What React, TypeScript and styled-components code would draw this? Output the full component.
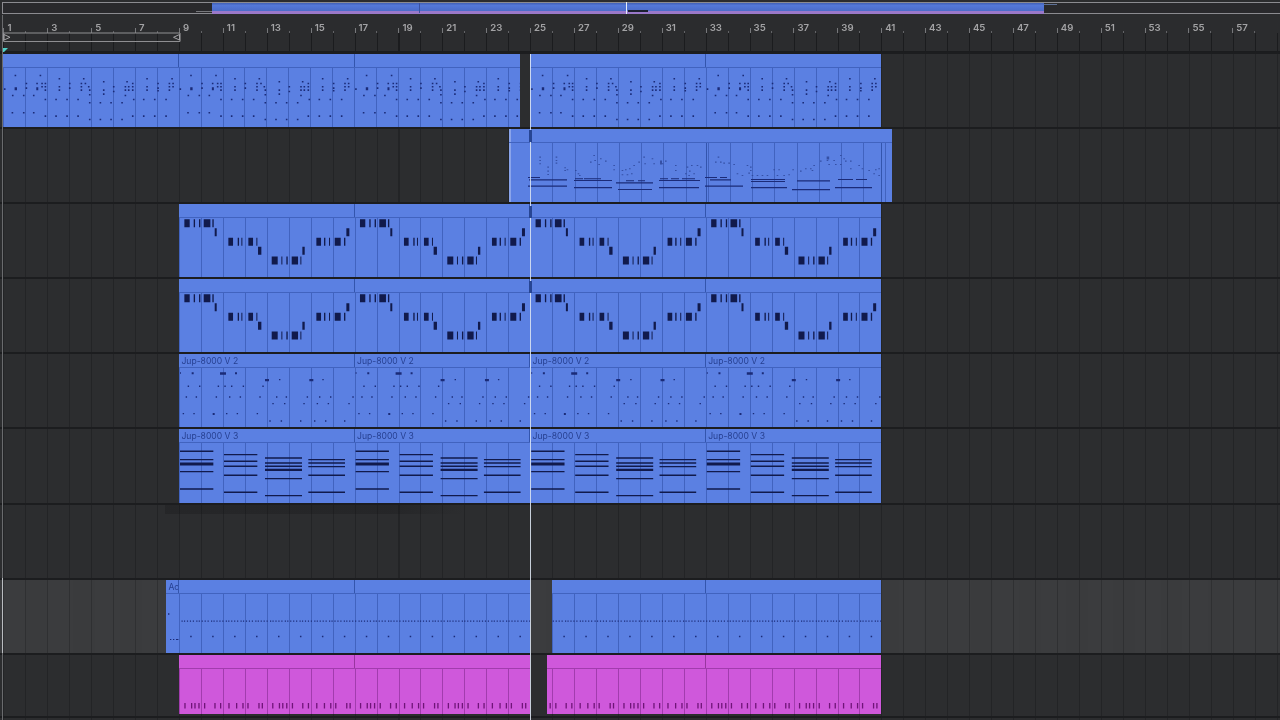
import React from 'react';
import styled, { createGlobalStyle } from 'styled-components';

const BAR = 21.95;
const ORIGIN = 3.4;
const ROW = 75.1;
const TOP = 52;
const PHRASE = BAR * 8;

type Rect = [number, number, number, number];

const barX = (bar: number) => ORIGIN + (bar - 1) * BAR;
const rowTop = (i: number) => TOP + ROW * i;

// vertical lines repeating along the timeline, phase in px from the left edge
const lines = (x: number, color: string, period: number, size = 1) => {
  const p = ((x % period) + period) % period;
  return `repeating-linear-gradient(90deg, transparent 0, transparent ${p}px, ${color} ${p}px, ${color} ${p + size}px, transparent ${p + size}px, transparent ${period}px)`;
};

// "x,y[,w[,h]]" lists read off the reference at 3x, repeated per phrase
const dots = (src: string, ox: number, oy: number, w = 1.6, h = 1.6, times = 5, period = PHRASE): Rect[] => {
  const out: Rect[] = [];
  const items = src.trim().split(/\s+/).map((s) => s.split(',').map(Number));
  for (let k = 0; k < times; k++) {
    items.forEach(([x, y, a, b]) => {
      out.push([ox + x / 3 + k * period, oy + y / 3, a ?? w, b ?? h]);
    });
  }
  return out;
};

const drumNotes = dots(
  `45,224 13,265 45,262,2.4,3 37,284 70,284 78,248 78,262 36,336 70,336
   120,224 110,248 110,262,2,3 125,248 135,248 125,258 135,258 135,268 100,284 135,296 100,336 135,346
   177,234 177,258 177,268 167,296 200,296 167,346 200,346 208,248 208,262
   250,234 243,248 255,248 243,258 243,268 265,258 268,268 268,282 233,296 268,306 233,346 268,356
   310,243 310,268 310,280 300,306 332,306 300,356 332,356 340,258 340,272
   380,243 375,258 385,258 397,248 397,258 375,268 385,268 397,268 375,284 365,306 400,296 365,356 397,346
   440,234 440,258 440,268 430,296 463,296 430,346 463,346 473,248 473,262 473,270
   515,234 507,248 518,248 507,258 507,268 518,258 497,296 497,346`,
  0,
  0
);

const leadLines: Rect[] = [
  [528, 177, 12, 1.2], [529, 179.4, 38, 1.3], [528, 185.6, 39, 1.3],
  [575, 178.4, 8, 1], [584, 178.4, 17, 1], [574, 180, 38, 1.2], [574, 187, 38, 1.3],
  [626, 180.4, 8, 1], [638, 180.4, 7, 1], [616, 182.4, 37, 1.2], [618, 189, 34, 1.2],
  [660, 178.4, 8, 1], [671, 178.4, 8, 1], [682, 178.4, 13, 1], [659, 180, 41, 1.2], [659, 187, 40, 1.3],
  [705, 177, 12, 1.2], [720, 177, 7, 1.2], [710, 179.4, 21, 1.3], [705, 185.6, 38, 1.3],
  [751, 179, 34, 1.2], [751, 181, 34, 1.2], [751, 187, 36, 1.3],
  [797, 180.4, 33, 1.2], [792, 189, 38, 1.3],
  [838, 179, 15, 1.2], [856, 179, 11, 1.2], [835, 187, 37, 1.3],
];

const leadDots: Rect[] = [
  ...dots(
    `103,50 103,60 103,70 152,50 152,60 152,68 127,80 127,92 127,102 178,82 178,90 185,88 210,90 218,100 222,105
     265,45 268,60 255,65 285,55 300,62 280,72 325,75 325,88 350,90 360,88 372,85 385,75 400,65 415,50 418,70
     440,55 445,70 465,62,2,4 470,70 480,62 510,75 510,90 545,80 552,92 558,75 575,75 585,80 350,103 365,103
     378,100 540,100 550,105 565,100`,
    505, 140, 1.6, 1.1, 1
  ),
  ...dots(
    `30,65 38,50 45,65 55,68 70,68 85,72 125,75 135,80 135,90 130,98 140,105 155,105 170,105 185,105 205,88 220,88
     215,105 235,105 250,103 262,88 285,92 300,85 315,85 325,75 320,90 345,62 365,50,2.5,3 365,60 385,60 405,45
     415,55 420,62 435,62 370,72 390,72 405,72 435,85 460,75 470,85 490,90 510,88 520,85 505,100 520,105 95,100 110,105`,
    705, 140, 1.6, 1.1, 1
  ),
];

const arpBlocks = (row: number): Rect[] => {
  const src: Rect[] = [
    [44, 58, 16, 24], [72, 58, 4, 24], [88, 58, 4, 24], [102, 58, 20, 24], [128, 58, 4, 24], [135, 85, 6, 24],
    [176, 114, 14, 24], [204, 114, 4, 24], [215, 114, 3, 24], [236, 114, 14, 24], [260, 114, 3, 24], [265, 141, 10, 24],
    [306, 170, 18, 24], [335, 170, 3, 24], [350, 170, 4, 24], [366, 170, 19, 24], [392, 170, 3, 24], [398, 141, 7, 24],
    [440, 114, 14, 24], [463, 114, 4, 24], [478, 114, 3, 24], [495, 114, 18, 24], [523, 114, 4, 24], [530, 85, 9, 24],
  ];
  const out: Rect[] = [];
  for (let k = 0; k < 4; k++) {
    src.forEach(([x, y, w, h]) => {
      out.push([169.7 + x / 3 + k * PHRASE, 200 + y / 3 + row * ROW, w / 3, h / 3]);
    });
  }
  return out;
};

const pluckNotes: Rect[] = dots(
  `30,68,1,1.6 65,68,2,2 150,68,6,2.4 195,68,2,2
   285,88,4,2.4 327,88 418,88,4,2.4 457,88
   53,108 87,108 143,108 163,108 183,108 218,108 277,108
   47,140 77,140 137,140 177,140 209,140 268,140 318,140 347,140 410,140 447,140 480,140 547,140
   307,160 342,160 400,160 440,160 473,160 535,160
   38,190 70,190 128,190,2,2 168,190 200,190 260,190
   298,212 332,212 390,212 432,212 465,212 522,212`,
  170,
  350,
  1.4,
  1.4,
  4
);

const chordNotes: Rect[] = (() => {
  const groups: [number, number, number[]][] = [
    [30, 100, [305, 330, 366, 418]],
    [162, 100, [315, 335, 350, 377, 428]],
    [285, 111, [325, 340, 350, 387, 438]],
    [415, 110, [330, 340, 351, 377, 428]],
  ];
  const out: Rect[] = [];
  for (let k = 0; k < 4; k++) {
    groups.forEach(([x, w, ys]) => {
      ys.forEach((y) => out.push([170 + x / 3 + k * PHRASE, 350 + y / 3 - 0.6, w / 3, 1.4]));
    });
    out.push([170 + 30 / 3 + k * PHRASE, 350 + 343 / 3 - 1.4, 100 / 3, 3]);
    out.push([170 + 285 / 3 + k * PHRASE, 350 + 361 / 3 - 1, 111 / 3, 2.2]);
  }
  return out;
})();

const hatLine: Rect[] = Array.from({ length: 238 }, (_, i) => [181 + i * 2.95 + (i % 5 === 0 ? 0.5 : 0), 620.3, 1.2, 1.1] as Rect);
const kickDots: Rect[] = [
  ...Array.from({ length: 32 }, (_, i) => [190.2 + i * BAR, 635.5, 1.5, 1.5] as Rect),
  [168, 613, 1.4, 1.4],
  [170, 638.6, 1.3, 1.2],
  [173, 638.6, 1.3, 1.2],
  [176, 638.6, 2.4, 1.2],
];

const rimTicks: Rect[] = dots(
  '553,0 573,0 583,0 595,0 612,0 643,0 660,0 685,0 708,0 727,0 742,0 775,0 785,0',
  0,
  702.7,
  1.3,
  5.6,
  9,
  BAR * 4
);

const palette = {
  blue: { fill: '#5b80e2', rule: '#4163bf', seam: '#3355ad', note: '#1b2b78', faint: '#2c4496', text: '#263f90' },
  pink: { fill: '#cf58db', rule: '#a23cae', seam: '#98359f', note: '#6f1478', faint: '#6f1478', text: '#6f1478' },
};

type Tone = keyof typeof palette;

const GlobalStyle = createGlobalStyle`
  html, body {
    margin: 0;
    background: #2b2c2e;
    font-family: Inter, "Liberation Sans", sans-serif;
  }
`;

const Page = styled.div`
  position: relative;
  width: 1280px;
  height: 720px;
  overflow: hidden;
  background: #2b2c2e;
  filter: blur(0.3px);
`;

const Overview = styled.div`
  height: 15px;
  padding: 2px 0 0 2px;
  box-sizing: border-box;
`;

const OverviewFrame = styled.div`
  display: flex;
  height: 12px;
  box-sizing: border-box;
  background: #29292c;
  border-top: 1px solid #8b8b90;
  border-bottom: 1px solid #8b8b90;
  border-left: 1px solid #8b8b90;
`;

const OverviewGap = styled.div`
  display: flex;
  align-items: flex-end;
  justify-content: flex-end;
  width: 209px;
  flex: none;
`;

const OverviewStub = styled.div`
  width: 16px;
  height: 1px;
  margin-bottom: 1px;
  background: #77787c;
`;

const OverviewBand = styled.div`
  display: flex;
  flex-direction: column;
  width: 832px;
  flex: none;
  margin-bottom: -1px;
`;

const OverviewBlue = styled.div`
  flex: 1;
  background: linear-gradient(#3f5fb5, #5478d8 30%, #4b6cc9);
`;

const OverviewPink = styled.div`
  height: 3px;
  background: #9a78c9;
`;

const OverviewTail = styled.div`
  width: 13px;
  height: 1px;
  margin-top: 1px;
  background: #5d7096;
`;

const OverviewCursor = styled.div`
  position: absolute;
  left: 626px;
  top: 2px;
  width: 1px;
  height: 12px;
  background: #e6edf8;
`;

const OverviewBlip = styled.div`
  position: absolute;
  left: 628px;
  top: 10px;
  width: 20px;
  height: 2px;
  background: #1c2030;
`;

const OverviewMark = styled.div`
  position: absolute;
  left: 419px;
  top: 3px;
  width: 1px;
  height: 10px;
  background: #3a52a0;
`;

const Ruler = styled.div`
  height: 37px;
  display: flex;
  flex-direction: column;
`;

const RulerLabels = styled.div`
  display: flex;
  height: 18px;
  padding-left: ${ORIGIN}px;
`;

const RulerCell = styled.div`
  display: flex;
  flex: none;
  width: ${BAR * 2}px;
  align-items: flex-end;
  gap: 3px;
  box-sizing: border-box;
  background: linear-gradient(#626366, #626366) no-repeat ${BAR}px 100% / 1px 2px;
`;

const RulerTick = styled.span`
  width: 1px;
  height: 5px;
  background: #77787b;
`;

const RulerNumber = styled.span`
  font-family: Inter, "Liberation Sans", sans-serif;
  font-size: 9.6px;
  font-weight: 600;
  line-height: 11px;
  color: #a3a3a5;
`;

const LoopLane = styled.div`
  flex: 1;
  background-image: ${lines(ORIGIN, '#1b1c1e', BAR)};
  border-bottom: 1px solid #1b1c1e;
`;

const LoopBrace = styled.svg`
  position: absolute;
  left: 3px;
  top: 32px;
`;

const StartMark = styled.svg`
  position: absolute;
  left: 3px;
  top: 48px;
`;

const Lanes = styled.div`
  display: flex;
  flex-direction: column;
`;

const Track = styled.div<{ $lit?: boolean; $height?: number; $foot?: number }>`
  display: flex;
  flex: none;
  height: ${(p) => p.$height ?? ROW}px;
  padding: 2px 0 ${(p) => p.$foot ?? 0}px;
  box-sizing: border-box;
  background-color: ${(p) => (p.$lit ? '#3b3c3e' : '#2c2d2f')};
  background-image: ${(p) =>
    p.$lit
      ? `${lines(ORIGIN, '#2f3032', BAR)}, ${lines(ORIGIN + BAR, '#3a3b3d', BAR * 2, BAR)}`
      : `${lines(ORIGIN, '#232426', BAR)}`};
  box-shadow: inset 0 2px 0 #1c1d1f;
`;

const TrackEdge = styled.div`
  position: absolute;
  left: 2px;
  top: ${rowTop(7)}px;
  width: 1px;
  height: ${ROW}px;
  background: #b9bcc0;
`;

const GutterLine = styled.div`
  position: absolute;
  left: 2px;
  top: 15px;
  bottom: 0;
  width: 1px;
  background: #6a6b6e;
`;

const Shade = styled.div`
  flex: none;
  margin-left: 165px;
  width: 300px;
  height: 9px;
  background: linear-gradient(90deg, rgba(18, 18, 20, 0.25) 75%, rgba(18, 18, 20, 0));
`;

const ClipBox = styled.div<{ $gap: number; $width: number; $tone: Tone; $edge?: boolean }>`
  flex: none;
  display: flex;
  flex-direction: column;
  overflow: hidden;
  margin-left: ${(p) => p.$gap}px;
  width: ${(p) => p.$width}px;
  background: ${(p) => palette[p.$tone].fill};
  box-shadow: ${(p) => (p.$edge ? 'inset 2px 0 0 #8aa4ea' : 'none')};
`;

const ClipHeader = styled.div<{ $tone: Tone }>`
  display: flex;
  flex: none;
  height: 13px;
  border-bottom: 1px solid ${(p) => palette[p.$tone].rule};
`;

const HeaderPart = styled.div<{ $width: number; $tone: Tone; $seam: boolean }>`
  flex: none;
  width: ${(p) => p.$width}px;
  box-sizing: border-box;
  padding-left: 2.4px;
  overflow: hidden;
  white-space: nowrap;
  font-family: Inter, "Liberation Sans", sans-serif;
  font-size: 8.6px;
  line-height: 14px;
  color: ${(p) => palette[p.$tone].text};
  border-right: ${(p) => (p.$seam ? `1px solid ${palette[p.$tone].seam}` : '0')};
`;

const ClipBody = styled.div<{ $phase: number; $tone: Tone }>`
  flex: 1;
  min-height: 0;
  background-image: ${(p) => lines(p.$phase + PHRASE * 20, palette[p.$tone].rule, BAR)},
    ${(p) => lines(p.$phase + PHRASE * 20, palette[p.$tone].seam, PHRASE)};
`;

const RollSvg = styled.svg`
  display: block;
`;

const Playhead = styled.div`
  position: absolute;
  left: 529.6px;
  top: 54px;
  bottom: 0;
  width: 1.4px;
  background: rgba(226, 235, 248, 0.86);
`;

const HeadNotch = styled.div<{ $y: number }>`
  position: absolute;
  left: 529px;
  top: ${(p) => p.$y}px;
  width: 3px;
  height: 12px;
  background: #274593;
`;

const toPath = (rects: Rect[]) => rects.map(([x, y, w, h]) => `M${x.toFixed(2)} ${y.toFixed(2)}h${w}v${h}h${-w}z`).join('');

type ClipSpec = {
  start: number;
  end: number;
  tone?: Tone;
  label?: string;
  firstLabel?: string;
  edge?: boolean;
  plainHeader?: boolean;
  ink?: string;
  notes?: Rect[];
  faint?: Rect[];
};

const Clip = ({ spec, row, prevEnd, height = 60 }: { spec: ClipSpec; row: number; prevEnd: number; height?: number }) => {
  const tone = spec.tone ?? 'blue';
  const width = spec.end - spec.start;
  const cuts: number[] = [];
  if (!spec.plainHeader) {
    for (let b = 1; b < 80; b += 8) {
      const x = barX(b);
      if (x > spec.start + 1 && x < spec.end - 1) cuts.push(x);
    }
  }
  const edges = [spec.start, ...cuts, spec.end];
  return (
    <ClipBox $gap={spec.start - prevEnd} $width={width} $tone={tone} $edge={spec.edge}>
      <ClipHeader $tone={tone}>
        {edges.slice(1).map((x, i) => (
          <HeaderPart key={x} $width={x - edges[i]} $tone={tone} $seam={i < edges.length - 2}>
            {i === 0 && spec.firstLabel ? spec.firstLabel : spec.label}
          </HeaderPart>
        ))}
      </ClipHeader>
      <ClipBody $phase={ORIGIN - spec.start} $tone={tone}>
        <RollSvg width={width} height={height} viewBox={`${spec.start} ${rowTop(row) + 16} ${width} ${height}`}>
          {spec.faint && <path d={toPath(spec.faint)} fill={palette[tone].faint} opacity={0.8} />}
          {spec.notes && <path d={toPath(spec.notes)} fill={spec.ink ?? palette[tone].note} />}
        </RollSvg>
      </ClipBody>
    </ClipBox>
  );
};

const END = barX(41);
const MID = barX(9);
const INK = '#111a4c';

const tracks: ClipSpec[][] = [
  [
    { start: ORIGIN, end: 520, notes: drumNotes },
    { start: 530, end: END, notes: drumNotes },
  ],
  [{ start: 509, end: 892, edge: true, plainHeader: true, notes: leadLines, faint: leadDots }],
  [{ start: MID, end: END, ink: INK, notes: arpBlocks(0) }],
  [{ start: MID, end: END, ink: INK, notes: arpBlocks(1) }],
  [{ start: MID, end: END, label: 'Jup-8000 V 2', notes: pluckNotes }],
  [{ start: MID, end: END, label: 'Jup-8000 V 3', ink: INK, notes: chordNotes }],
  [],
  [
    { start: 166, end: 530, firstLabel: 'Ad', notes: [...hatLine.filter((r) => r[0] < 530), ...kickDots.filter((r) => r[0] < 530)] },
    { start: 552, end: END, notes: [...hatLine, ...kickDots].filter((r) => r[0] > 552) },
  ],
  [
    { start: MID, end: 530, tone: 'pink', notes: rimTicks },
    { start: 547, end: END, tone: 'pink', notes: rimTicks },
  ],
];

const bars = Array.from({ length: 29 }, (_, i) => i * 2 + 1);

export default function App() {
  return (
    <Page>
      <GlobalStyle />
      <Overview>
        <OverviewFrame>
          <OverviewGap>
            <OverviewStub />
          </OverviewGap>
          <OverviewBand>
            <OverviewBlue />
            <OverviewPink />
          </OverviewBand>
          <OverviewTail />
        </OverviewFrame>
      </Overview>
      <OverviewMark />
      <OverviewBlip />
      <OverviewCursor />
      <Ruler>
        <RulerLabels>
          {bars.map((bar) => (
            <RulerCell key={bar}>
              <RulerTick />
              <RulerNumber>{bar}</RulerNumber>
            </RulerCell>
          ))}
        </RulerLabels>
        <LoopLane />
      </Ruler>
      <Lanes>
        {tracks.map((clips, row) => (
          <Track key={row} $lit={row === 7} $height={row === 8 ? 63 : undefined} $foot={row === 8 ? 1.5 : 0}>
            {row === 6 && <Shade />}
            {clips.map((spec, i) => (
              <Clip
                key={spec.start}
                spec={spec}
                row={row}
                prevEnd={i === 0 ? 0 : clips[i - 1].end}
                height={row === 8 ? 45 : 60}
              />
            ))}
          </Track>
        ))}
        <Track />
      </Lanes>
      <GutterLine />
      <TrackEdge />
      <LoopBrace width="178" height="11" viewBox="0 0 178 11">
        <path d="M0.5 1H177M0.5 9.5H177M0.5 1V9.5M177 1V9.5" fill="none" stroke="#8f8f92" strokeWidth="1.2" />
        <path d="M1 2.5L7 5.3L1 8ZM176.5 2.5L170.5 5.3L176.5 8Z" fill="none" stroke="#a3a3a6" strokeWidth="1" />
      </LoopBrace>
      <StartMark width="5" height="4" viewBox="0 0 5 4">
        <path d="M0 0H5L1 4H0Z" fill="#4fd0c8" />
      </StartMark>
      <Playhead />
      <HeadNotch $y={130} />
      <HeadNotch $y={206} />
      <HeadNotch $y={281} />
    </Page>
  );
}
